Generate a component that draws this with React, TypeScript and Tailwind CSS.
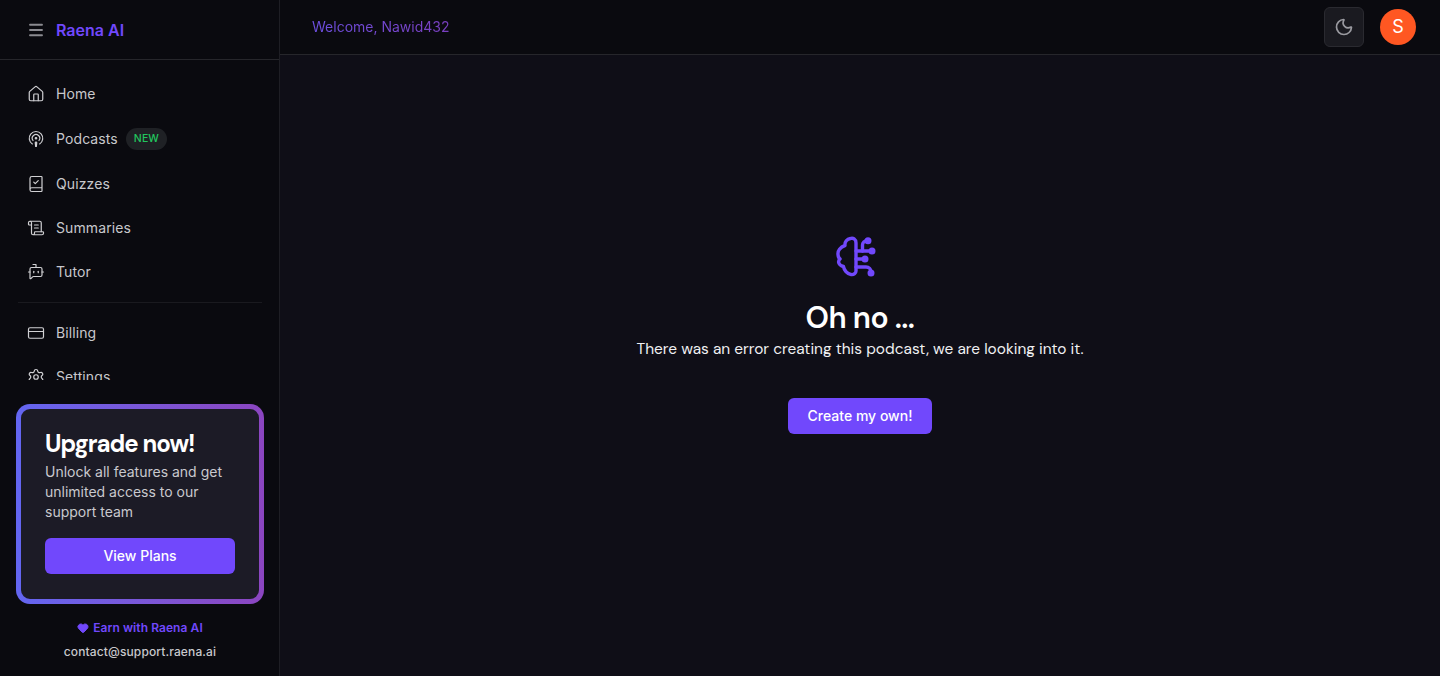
import { Menu, House, Podcast, BookCheck, ScrollText, BotMessageSquare, CreditCard, Settings, Moon, Heart } from 'lucide-react';
import type { ReactNode } from 'react';

function NavRow({ icon, label, badge }: { icon: ReactNode; label: string; badge?: boolean }) {
  return (
    <a className="flex items-center gap-[11px] px-[27px] py-3 text-sm leading-5 font-normal tracking-[0.1px] text-[#c8c8cc]">
      <span className="flex w-[18px] shrink-0 justify-center text-[#d0d0d3]">{icon}</span>
      <span>{label}</span>
      {badge && (
        <span className="-ml-[3px] h-[22px] rounded-full bg-[#1f2125] px-2 text-[10.5px] leading-[21px] font-medium text-[#22c55e]">
          NEW
        </span>
      )}
    </a>
  );
}

function BrainIcon() {
  return (
    <svg width="48" height="48" viewBox="0 0 48 48" fill="none" stroke="currentColor" strokeWidth="3.4" strokeLinecap="round" strokeLinejoin="round" className="text-[#7148fc]">
      <path d="M20 10C20 6 17 4.700 14.500 5.500 11 6.200 8.500 9 9 12.500 4 14 1.700 18 2 21 2 23.500 2.500 25 4 26 1.700 28 2 32 7.500 33.500 8 37 11 41 15 41.500 18 42 20 40 20 38Z" />
      <path d="M20 18H35" />
      <path d="M20 26H28" />
      <path d="M20 34H30C33 34 35 36 35 39" />
      <path d="M26.500 18V12C26.500 9.500 28.500 7.700 31 7.700" />
      <circle cx="32" cy="7.700" r="1.800" fill="currentColor" />
      <circle cx="36" cy="18" r="1.800" fill="currentColor" />
      <circle cx="29" cy="26" r="1.800" fill="currentColor" />
      <circle cx="35" cy="40" r="1.800" fill="currentColor" />
    </svg>
  );
}

export default function App() {
  return (
    <div className="flex h-screen overflow-hidden bg-[#0f0e17] font-['Inter',sans-serif] text-white antialiased">
      <aside className="flex w-[280px] shrink-0 flex-col border-r border-[#1e1e24] bg-[#0a0a0f]">
        <div className="flex h-[60px] shrink-0 items-center gap-[11px] border-b border-[#26262b] px-[27px]">
          <Menu size={18} strokeWidth={2.5} className="text-[#8a8a90]" />
          <span className="text-base font-semibold text-[#7148fc]">Raena AI</span>
        </div>
        <nav className="min-h-0 flex-1 overflow-hidden pt-3">
          <NavRow icon={<House size={18} strokeWidth={1.6} />} label="Home" />
          <NavRow icon={<Podcast size={18} strokeWidth={1.6} />} label="Podcasts" badge />
          <NavRow icon={<BookCheck size={18} strokeWidth={1.6} />} label="Quizzes" />
          <NavRow icon={<ScrollText size={18} strokeWidth={1.6} />} label="Summaries" />
          <NavRow icon={<BotMessageSquare size={18} strokeWidth={1.6} />} label="Tutor" />
          <div className="mt-2 mr-[17px] mb-2 ml-[18px] h-px bg-[#1a1a1f]" />
          <NavRow icon={<CreditCard size={18} strokeWidth={1.6} />} label="Billing" />
          <NavRow icon={<Settings size={18} strokeWidth={1.6} />} label="Settings" />
        </nav>
        <div className="shrink-0 pt-6 pr-[15px] pl-4">
          <div className="rounded-[14px] bg-gradient-to-r from-[#6366f1] to-[#8b45c0] p-[5px]">
            <div className="h-[190px] rounded-[9px] bg-[#1c1b26] px-6 pt-[17px]">
              <h3 className="font-['DM_Sans','Open_Sans',sans-serif] text-2xl leading-9 font-bold tracking-[-1px] text-white">Upgrade now!</h3>
              <p className="text-sm leading-5 text-[#c9c9ce]">Unlock all features and get unlimited access to our support team</p>
              <button className="mt-4 h-9 w-full rounded-md bg-[#7148fc] text-sm font-[450] text-white">View Plans</button>
            </div>
          </div>
          <div className="flex h-[72px] flex-col items-center pt-4 text-xs leading-4 font-semibold">
            <div className="flex items-center gap-1 tracking-[0.07px] text-[#7148fc]">
              <Heart size={12} fill="currentColor" />
              <span>Earn with Raena AI</span>
            </div>
            <div className="mt-2 font-medium tracking-[0.12px] text-[#c8c8cc]">contact@support.raena.ai</div>
          </div>
        </div>
      </aside>
      <main className="flex min-w-0 flex-1 flex-col">
        <header className="flex h-[55px] shrink-0 items-center justify-between border-b border-[#26262b] bg-[#0a0a0f] pr-6 pl-8">
          <span className="bg-gradient-to-r from-[#6d4fe0] to-[#7a3fc0] bg-clip-text text-sm text-transparent">Welcome, Nawid432</span>
          <div className="flex items-center gap-4">
            <button className="flex h-10 w-10 items-center justify-center rounded-md border border-[#2a2a30] bg-[#1a1a20] text-[#9a9aa0]">
              <Moon size={20} />
            </button>
            <div className="flex h-9 w-9 items-center justify-center rounded-full bg-[#ff5722] text-lg text-white">S</div>
          </div>
        </header>
        <section className="flex flex-1 flex-col items-center pt-[178px]">
          <BrainIcon />
          <h1 className="mt-[19px] font-['DM_Sans','Open_Sans',sans-serif] text-3xl leading-9 font-semibold tracking-[-0.55px] text-white">Oh no ...</h1>
          <p className="mt-px font-['DM_Sans','Open_Sans',sans-serif] text-[15.45px] leading-6 text-[#f0f0f2]">There was an error creating this podcast, we are looking into it.</p>
          <button className="mt-[37px] h-9 w-[144px] rounded-md bg-[#7148fc] text-sm font-[450] text-white">Create my own!</button>
        </section>
      </main>
    </div>
  );
}
